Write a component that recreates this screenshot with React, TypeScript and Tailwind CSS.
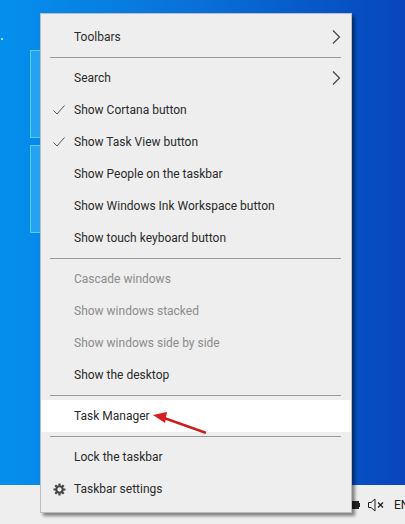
const font = "font-['Roboto',sans-serif]";

function Check() {
  return (
    <svg width="12" height="12" viewBox="0 0 12 12" fill="none" stroke="#555" strokeWidth="1">
      <path d="M0.5 6.5 L4 10 L11.5 1.5" />
    </svg>
  );
}

function Chevron() {
  return (
    <svg width="9" height="14" viewBox="0 0 9 14" fill="none" stroke="#444" strokeWidth="1.2">
      <path d="M1 0.5 L7.5 7 L1 13.5" />
    </svg>
  );
}

function Gear() {
  return (
    <svg width="13" height="13" viewBox="0 0 24 24" fill="none" stroke="#444" strokeWidth="4">
      <circle cx="12" cy="12" r="6" />
      <path d="M12 1v4M12 19v4M1 12h4M19 12h4M4.2 4.2l2.8 2.8M17 17l2.8 2.8M19.8 4.2L17 7M7 17l-2.8 2.8" strokeWidth="4" />
    </svg>
  );
}

function Row({
  label,
  left,
  arrow,
  disabled,
  active,
}: {
  label: string;
  left?: React.ReactNode;
  arrow?: boolean;
  disabled?: boolean;
  active?: boolean;
}) {
  return (
    <div className={`flex h-8 items-center ${active ? "bg-white" : ""}`}>
      <div className="flex w-[33px] shrink-0 items-center justify-center pl-[3px]">{left}</div>
      <span className={`flex-1 text-[12px] leading-none ${disabled ? "text-[#8c8c8c]" : "text-[#2b2b2b]"}`}>{label}</span>
      {arrow ? (
        <div className="mr-[10px] flex w-[9px]">
          <Chevron />
        </div>
      ) : null}
    </div>
  );
}

function Sep() {
  return (
    <div className="py-[4px] pl-[9px] pr-[10px]">
      <div className="h-px bg-[#9a9a9a]" />
    </div>
  );
}

export default function App() {
  return (
    <div className={`relative flex h-[524px] w-[405px] flex-col overflow-hidden ${font}`}>
      <div className="flex h-[485px] items-start bg-gradient-to-r from-[#0590ee] via-[#0a6fd8] to-[#0845bd]">
        <div className="ml-[30px] mt-[50px] flex flex-col gap-[7px]">
          <div className="h-[88px] w-[12px] border border-[#4fd0f5] bg-[#25a2f0]" />
          <div className="h-[88px] w-[12px] border border-[#4fd0f5] bg-[#25a2f0]" />
        </div>
      </div>
      <div className="flex h-[39px] items-center justify-end bg-[#eeeeee] text-[12px] text-[#222]">
        <svg className="mr-[8px]" width="12" height="8" viewBox="0 0 12 8">
          <rect x="0" y="0" width="11" height="8" fill="#222" />
          <rect x="11" y="2" width="1" height="4" fill="#222" />
        </svg>
        <svg className="mr-[10px]" width="16" height="14" viewBox="0 0 16 14" fill="none" stroke="#222" strokeWidth="1">
          <path d="M0.5 4.5h2.5l4-3.5v12l-4-3.5H0.5z" />
          <path d="M10 4.5l5 5M15 4.5l-5 5" strokeWidth="1.3" />
        </svg>
        <span className="w-[11px] whitespace-nowrap">EN</span>
      </div>

      <div className="absolute left-[1px] top-[38px] size-[2px] bg-[#9be8f8]" />

      <div className="absolute left-[40px] top-[13px] w-[312px] border border-[#bdbdbd] bg-[#eeeeee] py-[7px] shadow-[3px_3px_3px_rgba(0,0,0,0.45)]">
        <Row label="Toolbars" arrow />
        <Sep />
        <Row label="Search" arrow />
        <Row label="Show Cortana button" left={<Check />} />
        <Row label="Show Task View button" left={<Check />} />
        <Row label="Show People on the taskbar" />
        <Row label="Show Windows Ink Workspace button" />
        <Row label="Show touch keyboard button" />
        <Sep />
        <Row label="Cascade windows" disabled />
        <Row label="Show windows stacked" disabled />
        <Row label="Show windows side by side" disabled />
        <Row label="Show the desktop" />
        <Sep />
        <div className="relative">
          <Row label="Task Manager" active />
          <svg className="absolute left-[111px] top-[6px]" width="56" height="30" viewBox="0 0 56 30">
            <path d="M12 12 L53 26.5" stroke="#cc1f1f" strokeWidth="2.4" strokeLinecap="round" />
            <path d="M1 9 L15 6 L13 17 Z" fill="#d91c1c" />
          </svg>
        </div>
        <Sep />
        <Row label="Lock the taskbar" />
        <Row label="Taskbar settings" left={<Gear />} />
      </div>
    </div>
  );
}
